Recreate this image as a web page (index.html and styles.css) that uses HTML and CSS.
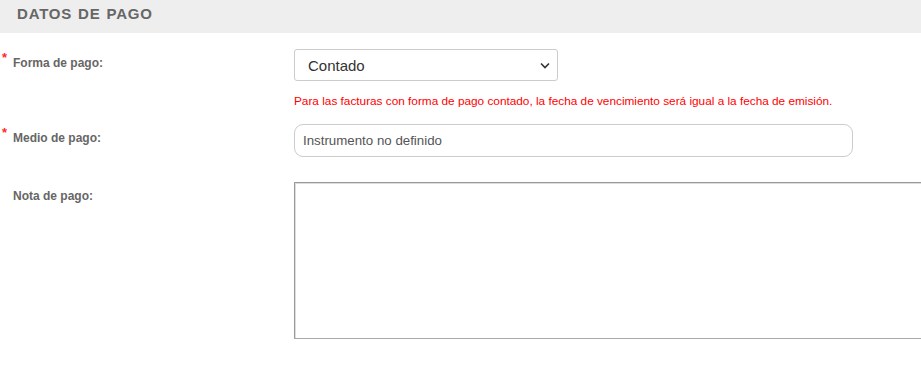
FILE: index.html
```html
<!DOCTYPE html>
<html lang="es">
<head>
    <meta charset="UTF-8">
    <title>Datos de pago</title>
    <link rel="stylesheet" href="styles.css">
</head>
<body>
    <div class="section-title">DATOS DE PAGO</div>

    <div class="form-row row-forma">
        <label class="field-label required">Forma de pago:</label>
        <div class="field">
            <div class="select-box">
                <span>Contado</span>
                <svg class="chevron" width="10" height="7" viewBox="0 0 10 7"><path d="M1 1.5 L5 5.5 L9 1.5" fill="none" stroke="#333" stroke-width="1.6"/></svg>
            </div>
            <p class="field-note">Para las facturas con forma de pago contado, la fecha de vencimiento será igual a la fecha de emisión.</p>
        </div>
    </div>

    <div class="form-row row-medio">
        <label class="field-label required">Medio de pago:</label>
        <div class="field">
            <div class="text-input">Instrumento no definido</div>
        </div>
    </div>

    <div class="form-row row-nota">
        <label class="field-label">Nota de pago:</label>
        <div class="field">
            <div class="text-area"></div>
        </div>
    </div>
</body>
</html>
```

FILE: styles.css
```css
html, body {
    margin: 0;
    overflow: hidden;
}
body {
    font-family: "Liberation Sans", Arial, sans-serif;
    background-color: #ffffff;
    width: 921px;
    height: 370px;
}
.section-title {
    background-color: #eeeeee;
    color: #666666;
    font-weight: bold;
    font-size: 15px;
    letter-spacing: 0.8px;
    word-spacing: 1px;
    height: 33px;
    line-height: 28px;
    padding-left: 17px;
}
.form-row {
    display: grid;
    grid-template-columns: 294px 1fr;
}
.row-forma {
    margin-top: 16px;
}
.row-medio {
    margin-top: 16px;
}
.row-nota {
    margin-top: 25px;
}
.field-label {
    position: relative;
    padding-left: 13px;
    padding-top: 7px;
    font-size: 12px;
    font-weight: bold;
    color: #666666;
    line-height: 14px;
}
.required::before {
    content: "*";
    position: absolute;
    left: 2px;
    top: 2px;
    color: #ff2a2a;
    font-size: 13px;
}
.field {
    min-width: 0;
}
.select-box {
    box-sizing: border-box;
    width: 264px;
    height: 32px;
    border: 1px solid #cccccc;
    border-radius: 3px;
    display: flex;
    align-items: center;
    justify-content: space-between;
    padding: 0 7px 0 13px;
    font-size: 15px;
    color: #333333;
}
.field-note {
    margin: 13px 0 0;
    color: #ff0000;
    font-size: 11.8px;
    line-height: 14px;
}
.text-input {
    box-sizing: border-box;
    width: 559px;
    height: 33px;
    border: 1px solid #cccccc;
    border-radius: 9px;
    padding: 0 8px;
    display: flex;
    align-items: center;
    font-size: 13.3px;
    color: #555555;
}
.text-area {
    box-sizing: border-box;
    width: 627px;
    height: 157px;
    border: 1px solid #a9a9a9;
    border-right: none;
    border-top-color: #999999;
    border-left-color: #999999;
    box-shadow: inset 1px 1px 0 #dddddd;
}
```
